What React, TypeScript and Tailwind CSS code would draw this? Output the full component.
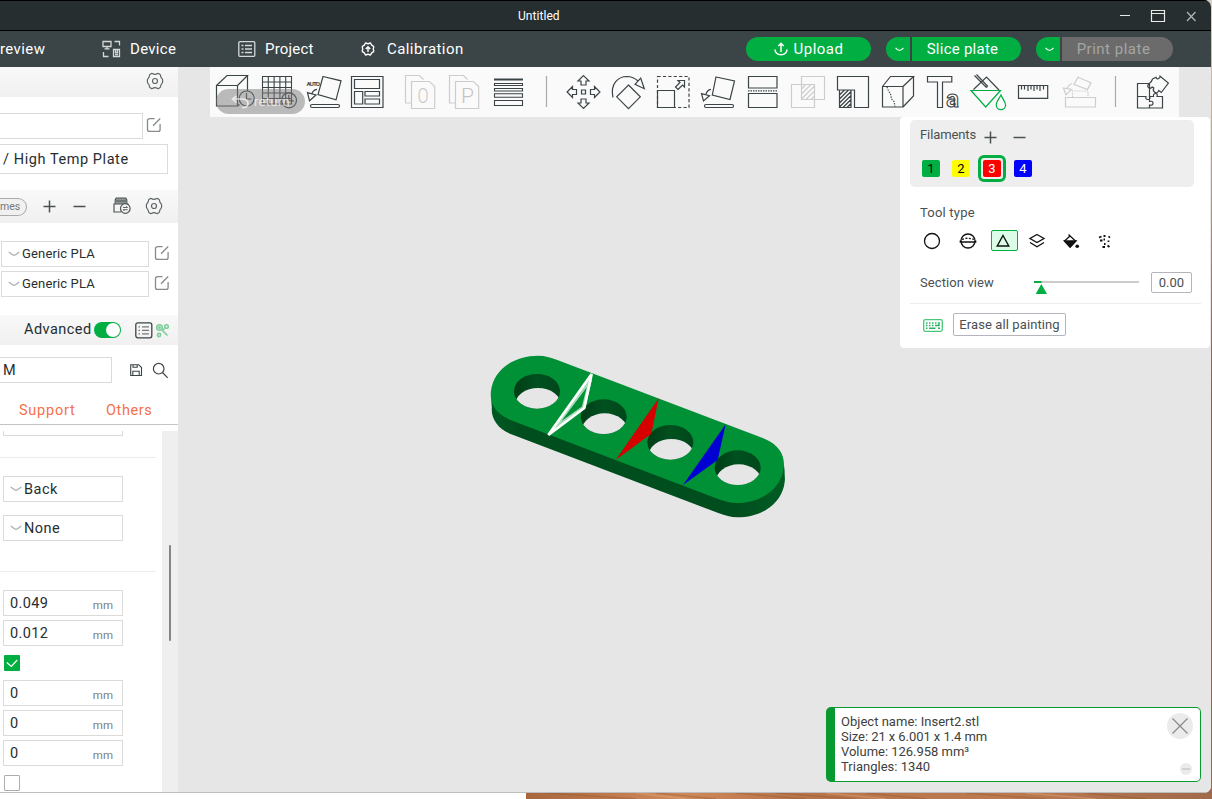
import React from "react";

const INK = "#3b4446";

function Tool({ x, w, children, color = INK }: { x: number; w: number; children: React.ReactNode; color?: string }) {
  return (
    <svg className="shrink-0" width={w} height={50} viewBox={`${x} 67 ${w} 50`} fill="none" stroke={color} strokeWidth="1.2">
      {children}
    </svg>
  );
}

function Gear() {
  return (
    <svg className="-mt-[2px]" width="18" height="18" viewBox="0 0 18 18" fill="none" stroke="#5d6567" strokeWidth="1.2" strokeLinejoin="round">
      <path d="M5.3 1.6q.8-.4 1.500.1.800.6 2.200.6t2.200-.6q.7-.5 1.500-.1l1.300.8q.6.4.6 1.300 0 1.500 1.400 3 .6.8.6 1.300v2q0 .5-.6 1.300-1.400 1.500-1.400 3 0 .9-.6 1.300l-1.300.8q-.8.4-1.500-.1-.8-.6-2.200-.6t-2.200.6q-.7.500-1.500.1L4 15.600q-.6-.4-.6-1.300 0-1.500-1.400-3-.6-.8-.6-1.300V8q0-.5.6-1.300 1.400-1.500 1.400-3 0-.9.6-1.300Z" />
      <circle cx="9" cy="9" r="2.500" />
    </svg>
  );
}

function Edit() {
  return (
    <svg className="-mt-[2px] shrink-0" width="16" height="16" viewBox="0 0 16 16" fill="none" stroke="#868b8c" strokeWidth="1.3">
      <path d="M8.500 1.600H3.500a2 2 0 0 0-2 2v8.800a2 2 0 0 0 2 2h8.600a2 2 0 0 0 2-2V7M7 8.800 14.200 1.500" />
    </svg>
  );
}

function Chevron() {
  return (
    <svg className="shrink-0" width="12" height="6" viewBox="0 0 12 6" fill="none" stroke="#a9adae" strokeWidth="1.2">
      <path d="M.7 1 4.500 3.700q1.500.9 3 0L11.300 1" />
    </svg>
  );
}

function Plus() {
  return (
    <svg className="-ml-px -mt-px" width="13" height="13" viewBox="0 0 13 13" stroke="#4a5153" strokeWidth="1.5">
      <path d="M6.500.5v12M.5 6.500h12" />
    </svg>
  );
}

function Minus() {
  return (
    <svg className="-ml-px -mt-px" width="13" height="13" viewBox="0 0 13 13" stroke="#4a5153" strokeWidth="1.5">
      <path d="M.5 6.500h12" />
    </svg>
  );
}

function Caret() {
  return (
    <svg width="9" height="5" viewBox="0 0 9 5" fill="none" stroke="#e8fff0" strokeWidth="1.200">
      <path d="M.6.8Q4.500 6 8.400.8" />
    </svg>
  );
}

function Filament() {
  return (
    <div className="flex items-center">
      <div className="ml-px flex h-[26px] w-[148px] items-center border border-[#dbdbdb] pl-[6px]">
        <Chevron />
        <span className="ml-[2px] text-[13px] tracking-[0.15px]">Generic PLA</span>
      </div>
      <div className="ml-[5px]"><Edit /></div>
    </div>
  );
}

function Select({ value }: { value: string }) {
  return (
    <div className="ml-[3px] flex h-[26px] w-[120px] items-center border border-[#dbdbdb] pl-[6px]">
      <Chevron />
      <span className="ml-[2px] mt-[2px] text-[14.5px] tracking-[0.5px]">{value}</span>
    </div>
  );
}

function Field({ value }: { value: string }) {
  return (
    <div className="ml-[3px] flex h-[26px] w-[120px] items-center justify-between border border-[#dbdbdb] pl-[6px] pr-[9px]">
      <span className="mt-px text-[14.5px] tracking-[0.4px]">{value}</span>
      <span className="mt-[5px] text-[11.500px] text-[#7a7f80]">mm</span>
    </div>
  );
}

function TitleBar() {
  return (
    <header className="flex h-[31px] shrink-0 items-center border-y border-black bg-[#262e30] text-[12px] text-white">
      <span className="ml-[518px] w-[42px] tracking-[0.05px]">Untitled</span>
      <svg className="ml-[559px]" width="80" height="16" viewBox="1119 7 80 16" fill="none" stroke="#e8eaea" strokeWidth="1.200">
        <path d="M1120 14.500h10" />
        <path d="M1151.500 9.500h13v11h-13zM1151.500 12.500h13" />
        <path d="m1187 11 8.500 9M1195.500 11l-8.500 9" stroke="#b4b8b9" />
      </svg>
    </header>
  );
}

function NavBar() {
  return (
    <nav className="flex h-[36px] shrink-0 items-center bg-[#3b4446] text-[15px] text-white">
      <span className="w-[102px] tracking-[0.4px]">review</span>
      <div className="flex w-[136px] items-center gap-[9px]">
        <svg width="19" height="18" viewBox="0 0 19 18" fill="none" stroke="#d5d8d8" strokeWidth="1.3">
          <path d="M1 1.500h8v5H1zM5 6.500v2M2.500 8.800h5M12.500 1.500h5v4M1.500 12v4.500h5M11.500 9.500h6v7h-6zM13.500 9.500v3h2v-3M13 14.500h3" />
        </svg>
        <span className="tracking-[0.3px]">Device</span>
      </div>
      <div className="flex w-[123px] items-center gap-[9px]">
        <svg width="18" height="16" viewBox="0 0 18 16" fill="none" stroke="#d5d8d8" strokeWidth="1.300">
          <rect x=".8" y=".7" width="16" height="14.600" rx="1" />
          <path d="M3.500 4.500h2M7 4.500h7M3.500 8h2M7 8h7M3.500 11.500h2M7 11.500h7" />
        </svg>
        <span className="tracking-[0.2px]">Project</span>
      </div>
      <div className="flex w-[385px] items-center gap-[12px]">
        <svg width="14" height="14" viewBox="0 0 14 14" fill="none" stroke="#fff" strokeWidth="1.400" strokeLinejoin="round">
          <path d="M4.500 1q1 0 2.500.8Q8.500 1 9.500 1l1.200 2.200 1.900 1.100Q13 5.500 12.200 7q.8 1.500.4 2.700l-1.900 1.100L9.500 13q-1 0-2.500-.8-1.500.8-2.500.8l-1.200-2.200-1.900-1.100Q1 8.500 1.800 7 1 5.500 1.400 4.300l1.900-1.100Z" />
          <path d="M7 10V5M4.800 7 7 4.800 9.200 7" />
        </svg>
        <span className="tracking-[0.42px]">Calibration</span>
      </div>
      <button className="flex h-[24px] w-[125px] items-center justify-center gap-[6px] rounded-full bg-[#00ae42]">
        <svg width="14" height="14" viewBox="0 0 14 14" fill="none" stroke="#fff" strokeWidth="1.500">
          <path d="M7 10V1.500M4.300 4 7 1.300 9.700 4M1 7.500q.3 5 6 5.200 5.700-.2 6-5.200" />
        </svg>
        <span className="tracking-[0.5px]">Upload</span>
      </button>
      <div className="ml-[15px] flex gap-[2px]">
        <button className="flex h-[24px] w-[24px] items-center justify-center rounded-l-full bg-[#00ae42] pl-[3px]"><Caret /></button>
        <button className="h-[24px] w-[109px] rounded-r-full bg-[#00ae42] pr-[8px] tracking-[0.25px]">Slice plate</button>
      </div>
      <div className="ml-[15px] flex gap-[2px]">
        <button className="flex h-[24px] w-[24px] items-center justify-center rounded-l-full bg-[#00ae42] pl-[3px]"><Caret /></button>
        <button className="h-[24px] w-[111px] rounded-r-full bg-[#6b6b6b] pr-[8px] tracking-[0.5px] text-[#a5a5a5]">Print plate</button>
      </div>
    </nav>
  );
}

function Sidebar() {
  return (
    <aside className="flex w-[178px] shrink-0 flex-col overflow-hidden bg-white text-[#262e30]">
      <div className="flex h-[30px] shrink-0 items-center bg-linear-to-b from-[#f9f9f9] to-[#f0f0f0] pl-[146px]"><Gear /></div>
      <div className="mt-[16px] flex items-center">
        <div className="h-[26px] w-[143px] border border-l-0 border-[#dbdbdb]" />
        <div className="ml-[3px]"><Edit /></div>
      </div>
      <div className="mt-[5px] flex h-[30px] w-[168px] shrink-0 items-center border border-l-0 border-[#dbdbdb] pl-[3px] pt-[2px] text-[14.5px] tracking-[0.57px]">/ High Temp Plate</div>
      <div className="mt-[16px] flex h-[33px] shrink-0 items-center bg-linear-to-b from-[#f9f9f9] to-[#f0f0f0]">
        <div className="flex h-[18px] w-[27px] items-center rounded-r-[9px] border border-l-0 border-[#aaa] bg-[#f0f0f0] text-[10.5px] text-[#777]">mes</div>
        <div className="ml-[17px]"><Plus /></div>
        <div className="ml-[18px]"><Minus /></div>
        <svg className="-mt-[2px] ml-[27px]" width="18" height="17" viewBox="0 0 18 17" fill="none" stroke="#4f5658" strokeWidth="1.200">
          <path d="M8 15H1V7h14v2M2.200 7V3l1-2h9.600l1 2v4" />
          <path d="M3 4h10M4 1v6M6 1v6M8 1v6M10 1v6M12 1v6" />
          <circle cx="12.300" cy="11.500" r="4.800" fill="#f4f4f4" />
          <path d="M10 10.500h4.500l-1.200-1.300M14.700 12.700h-4.500l1.200 1.300" strokeWidth=".9" />
        </svg>
        <div className="ml-[14px]"><Gear /></div>
      </div>
      <div className="mt-[18px] flex flex-col gap-[4px]"><Filament /><Filament /></div>
      <div className="mt-[18px] flex h-[30px] shrink-0 items-center bg-linear-to-b from-[#f9f9f9] to-[#f0f0f0] pl-[24px]">
        <span className="w-[70px] text-[14.5px] tracking-[0.45px]">Advanced</span>
        <div className="flex h-[16px] w-[27px] items-center justify-end rounded-full bg-[#00ae42] pr-[1px]"><div className="h-[14px] w-[14px] rounded-full bg-white" /></div>
        <svg className="ml-[14px]" width="18" height="17" viewBox="0 0 18 17" fill="none" stroke={INK} strokeWidth="1.300">
          <rect x=".8" y=".8" width="16" height="15" rx="2" />
          <path d="M3.500 4.800h1.500M7 4.800h7M3.500 8.300h1.500M7 8.300h7M3.500 11.800h1.500M7 11.800h7" stroke="#757b7d" />
        </svg>
        <svg className="ml-[2px]" width="15" height="15" viewBox="0 0 15 15" fill="none" stroke="#7fce9b" strokeWidth="1.600">
          <circle cx="4.500" cy="4.500" r="2.800" /><circle cx="4.500" cy="4.500" r=".7" /><circle cx="11.500" cy="3.500" r="1.800" /><circle cx="4" cy="12" r="1.600" />
          <path d="m7 7 5.500 5.500M9.500 5.500 7.500 7.500" />
        </svg>
      </div>
      <div className="mt-[12px] flex shrink-0 items-center">
        <div className="flex h-[26px] w-[112px] items-center border border-l-0 border-[#dbdbdb] pl-[3px] pt-[2px] text-[14.5px]">M</div>
        <svg className="ml-[18px]" width="13" height="13" viewBox="0 0 13 13" fill="none" stroke={INK} strokeWidth="1.100">
          <path d="M.7.7h8l2.800 2.800v8H.7zM3 .7v2.600h4.200V.7M2.800 11.500V7.300h6.400v4.200" />
        </svg>
        <svg className="ml-[9px]" width="17" height="17" viewBox="0 0 17 17" fill="none" stroke={INK} strokeWidth="1.200">
          <circle cx="6.700" cy="6.700" r="5.300" /><path d="m10.500 10.500 5.200 5.300" />
        </svg>
      </div>
      <div className="flex h-[42px] shrink-0 items-center border-b border-[#c4c4c4] pl-[19px] pt-[14px] text-[14.5px] text-[#f5704a]">
        <span className="w-[87px] tracking-[0.75px]">Support</span>
        <span className="tracking-[0.6px]">Others</span>
      </div>
      <div className="mt-[6px] flex min-h-0 flex-1">
        <div className="flex w-[162px] flex-col">
          <div className="ml-[3px] h-[5px] w-[120px] shrink-0 border border-t-0 border-[#dbdbdb]" />
          <div className="mt-[21px] h-px w-[156px] shrink-0 bg-[#ececec]" />
          <div className="mt-[18px] flex flex-col gap-[13px]"><Select value="Back" /><Select value="None" /></div>
          <div className="mt-[30px] h-px w-[156px] shrink-0 bg-[#ececec]" />
          <div className="mt-[18px] flex flex-col gap-[4px]"><Field value="0.049" /><Field value="0.012" /></div>
          <div className="ml-[4px] mt-[9px] flex h-[16px] w-[16px] shrink-0 items-center justify-center rounded-[1px] bg-[#00ae42]">
            <svg width="12" height="9" viewBox="0 0 12 9" fill="none" stroke="#fff" strokeWidth="1.200"><path d="m.8 3.500 4.500 4L11.200 1" /></svg>
          </div>
          <div className="mt-[9px] flex flex-col gap-[4px]"><Field value="0" /><Field value="0" /><Field value="0" /></div>
          <div className="ml-[4px] mt-[9px] h-[16px] w-[16px] shrink-0 rounded-[1px] border border-[#adadad]" />
        </div>
        <div className="flex w-[16px] justify-center bg-[#efefef] pt-[114px]"><div className="h-[96px] w-[2px] rounded-full bg-[#858585]" /></div>
      </div>
    </aside>
  );
}

function Toolbar() {
  return (
    <div className="ml-[32px] flex h-[50px] w-[969px] shrink-0 bg-[#fafafa]">
      <Tool x={210} w={48}>
        <path d="M216.500 85.500h21V106h-21zM216.500 85.500 227 75.500h20.500l-10 10M247.500 75.500V91M237.500 106l2-1.500" />
        <circle cx="246.700" cy="98.500" r="7.500" /><path d="M246.500 93v6h5" />
      </Tool>
      <Tool x={258} w={44}>
        <path d="M262.500 76.500h29V104h-29zM268.300 76v28M274.100 76v28M279.900 76v28M285.700 76v28M262 82h29M262 87.500h29M262 93h29M262 98.500h29" strokeWidth="1.100" />
        <circle cx="289" cy="100.300" r="7.500" /><path d="M288.800 95v5.800h5" />
      </Tool>
      <Tool x={302} w={42}>
        <text x="306.500" y="86.300" fontSize="6.200" fontWeight="700" fontFamily="Roboto, sans-serif" fill={INK} stroke="none" textLength="13.500">AUTO</text>
        <path d="m323 76.500 18 4.300-5 19-18-5.300zM307.500 92.700l8.500 2.300-6.500 5.800zM312 93.500q1-3.500 5-4.200" />
        <rect x="310.500" y="104.500" width="29" height="3" rx="1.500" />
      </Tool>
      <Tool x={344} w={48}>
        <path d="M351.500 76.500h31.500v31h-31.500zM354.500 79.500h25v9h-25zM354.500 91.500h8.200v12.500h-8.200zM365 91.500h14.500v4.500H365zM365 99h14.500v5H365z" />
      </Tool>
      <Tool x={392} w={50} color="#cdcdcd">
        <path d="M411 103h-5.500V75.500h14l4 4M411.500 81.500h18l5.200 5v22h-23.200z" />
        <text x="423" y="103" fontSize="21" fontWeight="300" fontFamily="Roboto, sans-serif" fill="#c4c4c4" stroke="none" textAnchor="middle" textLength="11" lengthAdjust="spacingAndGlyphs">O</text>
      </Tool>
      <Tool x={442} w={44} color="#cdcdcd">
        <path d="M455 103h-5.500V75.500h14l4 4M455.500 81.500h18l5.200 5v22h-23.200z" />
        <text x="467.500" y="103" fontSize="21" fontWeight="300" fontFamily="Roboto, sans-serif" fill="#c4c4c4" stroke="none" textAnchor="middle">P</text>
      </Tool>
      <Tool x={486} w={44}>
        <path d="M494 79.500h29" strokeWidth="2" />
        <path d="M494.500 83.500h28v2h-28zM494.500 88.500h28v2.500h-28zM494.500 93.700h28v3.600h-28zM494.500 100.500h28v5h-28z" strokeWidth="1.100" />
      </Tool>
      <Tool x={530} w={30} color="#a9a9a9"><path d="M546.500 76v31" /></Tool>
      <Tool x={560} w={44}>
        <path d="M581.500 90h4v4h-4z" />
        {[0, 90, 180, 270].map((a) => (
          <path key={a} transform={`rotate(${a} 583.500 92)`} d="M583.500 75.600 589 81h-3v4h-5v-4h-3z" />
        ))}
      </Tool>
      <Tool x={604} w={46}>
        <path d="m628.500 85 11.800 11.800-11.800 11.800-11.800-11.800zM613 97.500C610 84 618 76.500 627 76.500q6.500.2 11 4.500M635 84.300l5.700-6.200 3.600 10.600z" />
      </Tool>
      <Tool x={650} w={45}>
        <path d="M657.500 76.500h31.500v31h-31.500z" strokeDasharray="3.200 2.200" />
        <path d="M657.500 90.500h17v17h-17zM678 89.500l4.500-4.500 2 2v-6.500H678l2 2-4.500 4.500z" />
      </Tool>
      <Tool x={695} w={45}>
        <path d="m716 77 18.500 4-4.500 18.500-17.700-4.500zM701.500 93.700l8 2-6 5.300zM706 94q1-4 5-4.700" />
        <rect x="704.500" y="104.500" width="29" height="3" rx="1.500" />
      </Tool>
      <Tool x={740} w={45}>
        <path d="M748.500 76.500h28.500V88h-28.500zM748.500 93.500h28.500v14h-28.500z" />
        <path d="M748 90.800h30" strokeDasharray="1.500 1" />
      </Tool>
      <Tool x={785} w={45} color="#cdcdcd">
        <path d="M801.500 76.500h23v23h-23zM791.500 84.500h23v23h-23zM801.500 89l4-4M801.500 94l9-9M801.500 99l13-13M806 99.500l8.500-8.500M811 99.500l3.500-3.500" />
      </Tool>
      <Tool x={830} w={45}>
        <path d="M837.500 76.500h31v31h-14V90h-17zM839.500 90h11.500v17.500h-11.500zM839.500 95l5-5M839.500 99l9-9M839.500 103l11.500-11.500M839.500 107l11.500-11.500M843 107.500l8-8M847 107.500l4-4" />
      </Tool>
      <Tool x={875} w={45}>
        <path d="M882.500 86.500H903v20.500h-20.500zM882.500 86.500l8-10h23l-10.500 10M913.500 76.500v19.500L903 107" />
        <path d="m887 87 1.500 4 2 3 1 5 2.500 2.500 1 5" strokeDasharray="1.300 1.300" />
      </Tool>
      <Tool x={920} w={45}>
        <path d="M927.500 76.500h24.300V82h-9.300v25.500h-5V82h-10z" />
        <text x="946.300" y="107" fontSize="23.500" fontWeight="700" fontFamily="Roboto, sans-serif" fill="#fafafa" strokeWidth="1.100">a</text>
      </Tool>
      <Tool x={965} w={45}>
        <path d="m973.500 89.500 13-12.500 12.500 13M974.500 75.500l12 12M976.500 74.500l11 11.500-1 1.500" />
        <path d="M971 90.500h29.500L985.700 107zM1001 95c-2 4-5 7-4.700 10a4.600 4.600 0 0 0 9.300 0c0-3-3-6-4.600-10Z" stroke="#00ae42" />
      </Tool>
      <Tool x={1010} w={45}>
        <path d="M1018.500 85.500h29.200v12.800h-29.200zM1021.500 86v3.500M1024.500 86v3.500M1028 86v5M1031 86v3.500M1034 86v5M1037 86v3.500M1040 86v5M1043.500 86v3.500" />
      </Tool>
      <Tool x={1055} w={50} color="#cdcdcd">
        <path d="M1065.500 97.500h30v9.500h-30zM1078 77.300l13 5.500-3.500 6.700-13.500-5zM1063.500 88l8 1.300-5.500 5.500zM1067 88q2-3.500 5-4.500" />
        <path d="M1072.500 97V91h15.500v6" strokeDasharray="1.500 1" />
      </Tool>
      <Tool x={1105} w={20} color="#a9a9a9"><path d="M1115.500 76v31" /></Tool>
      <Tool x={1125} w={54}>
        <path d="M1149.500 90.500v-7h-12v24.500h25V96.500h-5.500q1-3-1.500-3t-2 3h-4q1.500 3-1.500 3t-2-3h-8.500M1149.500 96.500v-6M1149.500 108v-3q3.500.8 3.500-1.800t-3.500-1.700v-5" />
        <path d="m1152.500 79 3.500-1.700q1 2.700 3 1t.500-2.500l8.900 7.200-7.100 9.500-2.500-2q-1.500 3.500-4 1.800t-1-4.300l-1.500-1q-2.500 2.500-4 .5t1.200-4.200q2.200-1.300 3-4.300Z" />
      </Tool>
    </div>
  );
}

function Swatch({ n, className }: { n: number; className: string }) {
  return <div className={`flex h-[17px] w-[18px] items-center justify-center rounded-[2px] pt-px text-[13px] ${className}`}>{n}</div>;
}

function PaintPanel() {
  return (
    <section className="absolute left-[722px] top-[50px] flex h-[231px] w-[310px] flex-col rounded-[4px] bg-white text-[13px] text-[#4a5052]">
      <div className="ml-[10px] mt-[3px] h-[67px] w-[284px] shrink-0 rounded-[5px] bg-[#eee] pl-[10px] pt-[5px]">
        <div className="flex h-[20px] items-center">
          <span className="w-[65px] tracking-[-0.1px]">Filaments</span>
          <div className="mt-[6px]"><Plus /></div>
          <div className="ml-[17px] mt-[6px]"><Minus /></div>
        </div>
        <div className="mt-[9px] flex h-[28px] items-center pl-[2px]">
          <Swatch n={1} className="bg-[#00ae42] text-black" />
          <Swatch n={2} className="ml-[12px] bg-[#ff0] text-black" />
          <div className="ml-[8px] flex h-[27px] w-[28px] items-center justify-center rounded-[6px] border-[3px] border-[#00ae42]">
            <Swatch n={3} className="bg-[#f00] text-white" />
          </div>
          <Swatch n={4} className="ml-[8px] bg-[#00f] text-white" />
        </div>
      </div>
      <div className="ml-[20px] mt-[16px] h-[20px] shrink-0 leading-[20px] tracking-[0.2px]">Tool type</div>
      <div className="ml-[22px] mt-[6px] flex h-[22px] shrink-0 items-center text-black">
        <svg className="mt-px" width="69" height="20" viewBox="922 231 69 20" fill="none" stroke="#111" strokeWidth="1.300">
          <circle cx="932" cy="241" r="7.500" /><circle cx="968" cy="241" r="7" />
          <path d="M960.300 240.500v1.500h15.400v-1.500" /><path d="M962 239.500q6-2.500 12 0" strokeDasharray="2 1.500" />
        </svg>
        <div className="flex h-[21px] w-[27px] items-center justify-center rounded-[2px] border border-[#00ae42] bg-[#dbfde7]">
          <svg className="-ml-[3px] mt-px" width="14" height="13" viewBox="0 0 14 13" fill="none" stroke="#111" strokeWidth="1.400"><path d="M7 1.500 12.800 12H1.200Z" /></svg>
        </div>
        <svg className="mt-px" width="100" height="20" viewBox="1018 231 100 20" fill="none" stroke="#111" strokeWidth="1.300">
          <path d="m1037 234.500 7 4-7 4-7-4zM1030 242.500l7 4.200 7-4.200" />
          <path d="M1068.500 234.500l7 6.500-5.500 6-5.500-6 6-5.500" />
          <path d="M1064.500 241h11.500l-5.800 6z" fill="#111" />
          <circle cx="1077.200" cy="246.200" r="1.800" fill="#111" stroke="none" />
          <path d="M1099 237.500l2.500-1M1103.500 236h2M1108.500 237.500l1.500-1M1100 240.500h2.500M1103.500 239.500h1.500M1108.500 240.500v1.500M1104 244h1.500M1102.500 247h2.500M1107.500 245.500l2 1.500" strokeWidth="1.800" />
        </svg>
      </div>
      <div className="ml-[20px] mt-[20px] flex h-[23px] shrink-0 items-center">
        <span className="w-[114px] tracking-[0.1px]">Section view</span>
        <svg width="106" height="22" viewBox="0 0 106 22">
          <path d="M0 10h105" stroke="#ccc" strokeWidth="2" /><path d="M0 10h7.500" stroke="#00ae42" strokeWidth="2" /><path d="M7.300 12 13 22H1.700Z" fill="#00ae42" />
        </svg>
        <div className="ml-[11px] flex h-[21px] w-[41px] items-center justify-center rounded-[2px] border border-[#b4b4bd]">0.00</div>
      </div>
      <div className="ml-[10px] mt-[9px] h-px w-[291px] shrink-0 bg-[#ececec]" />
      <div className="ml-[23px] mt-[9px] flex shrink-0 items-center">
        <svg className="mt-[2px]" width="20" height="13" viewBox="0 0 20 13" fill="none" stroke="#4cc67b" strokeWidth="1.300">
          <rect x=".7" y=".7" width="18.600" height="11.600" rx="1.500" />
          <path d="M3 4h1.500M6 4h1.500M9 4h1.500M12 4h1.500M16 3v4M3 6.500h1.500M6 6.500h1.500M9 6.500h1.500M12 6.500h4.500M3 9.300h1.500M6 9.300h6.500M15 9.300h2" stroke="#22b65c" strokeWidth="1.500" />
        </svg>
        <button className="ml-[10px] h-[23px] w-[113px] rounded-[2px] border border-[#b4b4bd] tracking-[0.1px]">Erase all painting</button>
      </div>
    </section>
  );
}

const HOLES = [[171, 139], [371, 215], [571, 292], [773, 368]];
const PLATE = "M89 224C45 205 28 172 33 138C40 75 100 32 175 32C195 32 212 37 230 44L855 282C899 301 916 334 911 368C904 431 844 474 769 474C749 474 732 469 714 462Z";

function Model() {
  return (
    <svg className="absolute left-[302px] top-[278px]" width="315" height="180" viewBox="0 0 945 540">
      <defs>
        <linearGradient id="wall"><stop offset="0" stopColor="#003d16" /><stop offset=".5" stopColor="#00511f" /><stop offset="1" stopColor="#00471b" /></linearGradient>
        <linearGradient id="side" gradientUnits="userSpaceOnUse" x1="32" y1="0" x2="914" y2="0"><stop offset="0" stopColor="#005a22" /><stop offset=".1" stopColor="#004d1d" /><stop offset=".82" stopColor="#004d1d" /><stop offset="1" stopColor="#005d24" /></linearGradient>
      </defs>
      <path d={PLATE} transform="translate(3 43)" fill="url(#side)" />
      <path d={PLATE} transform="translate(2 21)" fill="url(#side)" />
      <path d={PLATE} fill="#009136" />
      {HOLES.map(([x, y], i) => (
        <g key={i}>
          <clipPath id={`hole${i}`}><ellipse cx={x} cy={y} rx="69" ry="52" /></clipPath>
          <ellipse cx={x} cy={y} rx="69" ry="52" fill="url(#wall)" />
          <ellipse cx={x + 3} cy={y + 42} rx="69" ry="52" fill="#e6e6e6" clipPath={`url(#hole${i})`} />
        </g>
      ))}
      <path d="m536 160-22 106-107 79Z" fill="#d60000" />
      <path d="m737 238-24 107-104 75Z" fill="#0000d2" />
      <path d="m331 104-21 84-88 62Z" fill="none" stroke="#a5dbb8" strokeWidth="10" />
      <path d="m335 87-22 102-108 81Z" fill="none" stroke="#fff" strokeWidth="8" strokeLinejoin="bevel" />
    </svg>
  );
}

function ObjectInfo() {
  return (
    <section className="absolute left-[648px] top-[640px] flex h-[75px] w-[375px] justify-between overflow-hidden rounded-[5px] border border-l-[9px] border-[#089a30] bg-white pl-[6px] text-[13px] leading-[15px] text-[#404040]">
      <div className="pt-[6px]">
        <p className="tracking-[0.02px]">Object name: Insert2.stl</p>
        <p className="tracking-[-0.06px]">Size: 21 x 6.001 x 1.4 mm</p>
        <p className="tracking-[-0.02px]">Volume: 126.958 mm³</p>
        <p className="tracking-[0.02px]">Triangles: 1340</p>
      </div>
      <svg width="34" height="73" viewBox="1166 708 34 73" stroke="#8b8b8b" fill="none">
        <circle cx="1180" cy="726" r="13" fill="#ebebeb" stroke="none" /><path d="m1172.500 718.500 15 15M1187.500 718.500l-15 15" strokeWidth="1.300" />
        <circle cx="1186" cy="769" r="6" fill="#ebebeb" stroke="none" /><path d="M1182 769h8" stroke="#c8c8c8" strokeWidth="1.500" />
      </svg>
    </section>
  );
}

export default function App() {
  return (
    <div className="relative h-[799px] w-[1212px] overflow-hidden bg-linear-to-b from-[#d8cfc4] via-[#8a5b45] to-[#9a6850] font-[Roboto,sans-serif]">
      <div className="relative z-10 flex h-[793px] w-[1211px] flex-col overflow-hidden rounded-r-[7px] bg-[#e6e6e6]">
        <TitleBar />
        <NavBar />
        <div className="flex min-h-0 flex-1 border-b border-[#bdbdbd]">
          <Sidebar />
          <main className="relative flex w-[1033px] flex-col bg-[#e6e6e6]">
            <Toolbar />
            <div className="absolute left-[38px] top-[22px] flex h-[25px] w-[89px] items-center rounded-full bg-[#7a7a7a]/50 pl-[15px] text-[13px] tracking-[0.3px] text-white/70">
              <svg width="19" height="14" viewBox="0 0 19 14" fill="none" stroke="currentColor" strokeWidth="1.600"><path d="M5.500 1 1.500 4l4 3.500M1.500 4H11q6 0 6 4.500t-6 4" /></svg>
              <span className="ml-[4px]">return</span>
            </div>
            <Model />
            <PaintPanel />
            <ObjectInfo />
          </main>
        </div>
      </div>
      <div className="flex h-[6px]">
        <div className="w-[526px] bg-white" />
        <svg width="686" height="6" viewBox="0 0 686 6" preserveAspectRatio="none">
          <defs><linearGradient id="wood"><stop offset="0" stopColor="#a9653c" /><stop offset=".22" stopColor="#cf8a5b" /><stop offset=".4" stopColor="#b8744a" /><stop offset=".7" stopColor="#bd7a50" /><stop offset="1" stopColor="#a06a4c" /></linearGradient></defs>
          <path d="M0 0h686v6H0z" fill="url(#wood)" />
          <path d="M20 0l90 6M130 0l60 6M210 0l70 6M250 0l80 6M340 0l60 6M440 0l80 6M560 0l60 6" stroke="#8f5230" strokeWidth="1.500" opacity=".35" />
          <path d="M110 0l50 6M300 0l60 6M500 0l70 6" stroke="#dfa277" strokeWidth="1.500" opacity=".5" />
        </svg>
      </div>
    </div>
  );
}
